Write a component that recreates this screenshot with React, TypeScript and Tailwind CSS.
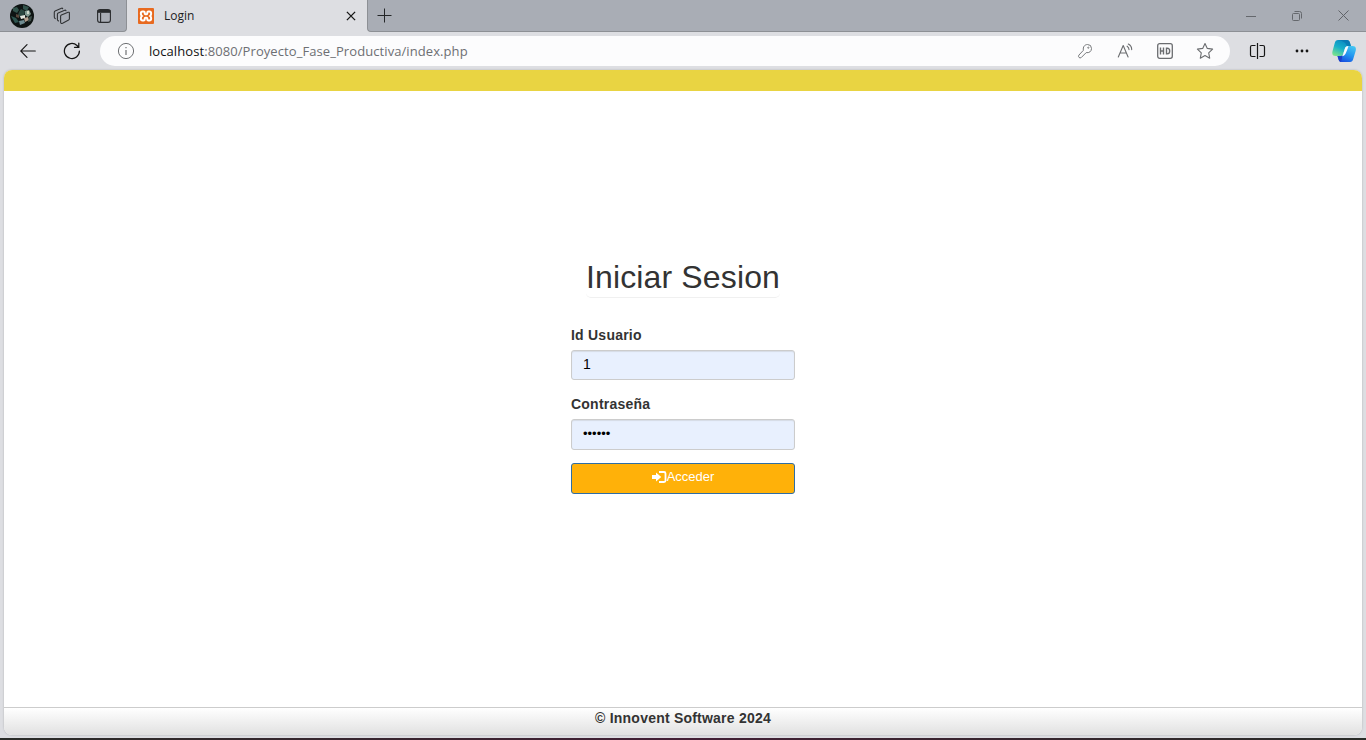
import type { ReactNode } from "react";

const ui = "font-['Open_Sans','Noto_Sans',sans-serif]";

function Cell({ className, children }: { className: string; children: ReactNode }) {
  return <div className={`flex shrink-0 items-center justify-center ${className}`}>{children}</div>;
}

function Avatar() {
  return (
    <svg width="24" height="24" viewBox="0 0 24 24">
      <defs>
        <clipPath id="avatar"><circle cx="12" cy="12" r="12" /></clipPath>
        <filter id="soft"><feGaussianBlur stdDeviation="0.5" /></filter>
      </defs>
      <g clipPath="url(#avatar)">
        <rect width="24" height="24" fill="#0e1413" />
        <g filter="url(#soft)">
          <path d="M3 4l4-1 2 3-2 3-4-2zM13 1l6 2-2 4-4-2z" fill="#31534b" />
          <path d="M9 8l2-3 4 2-1 5-4 1-2-2z" fill="#2c4740" />
          <path d="M15 7l4-1 2 4-3 3-3-2z" fill="#7e978e" />
          <path d="M17 7l2 0 0 3-2 0z" fill="#c9d3c6" />
          <path d="M10 12l5-1 0 3-4 1z" fill="#e3e6dd" />
          <path d="M14 14l4-1 1 3-4 2z" fill="#b09d8c" />
          <path d="M1 12l5 2 3 4-4 1z" fill="#2d5550" />
          <path d="M9 17l5-1 1 3-5 2z" fill="#6f8d92" />
          <path d="M6 10l3 1 0 3-3-1z" fill="#59463a" />
          <path d="M19 13l3-1-1 5-3 1z" fill="#3c4e49" />
        </g>
      </g>
    </svg>
  );
}

function WorkspacesIcon() {
  return (
    <svg width="18" height="18" viewBox="0 0 18 18" fill="none" stroke="#303234" strokeWidth="1.100" strokeLinejoin="round" strokeLinecap="round">
      <path d="M7.600 9.200q0-.9.800-1.300l6.700-2.600q1.300-.4 1.300.9v5.600q0 .9-.8 1.300l-6 3.100q-2 .8-2-1.100z" />
      <path d="M5.500 14l-.6-.5q-.5-.4-.5-1.100V7.200q0-.9.800-1.300l6.500-2.700q.9-.3 1.300.5" />
      <path d="M2.300 11.600l-.5-.4q-.5-.4-.5-1.100V5.200q0-.9.800-1.300L8.500 1.200q.9-.3 1.200.5" />
    </svg>
  );
}

function TabsIcon() {
  return (
    <svg width="14" height="14" viewBox="0 0 14 14" fill="none" stroke="#292b2d" strokeWidth="1.100">
      <rect x=".6" y=".6" width="12.800" height="12.800" rx="2.500" />
      <path d="M1 1.500h12v1.800H1z" fill="#292b2d" />
      <path d="M3.600 4v9" />
    </svg>
  );
}

function XamppIcon() {
  return (
    <svg width="16" height="16" viewBox="0 0 16 16" fill="none">
      <rect width="16" height="16" rx="1" fill="#e86a20" />
      <path d="M4.600 3.500h1Q6.700 3.500 6.700 4.600v.7q0 .9.9.9h.8q.9 0 .9-.9v-.7q0-1.100 1.100-1.100h1q1.700 0 1.700 1.700v.9q0 1.100-1 1.900 1 .8 1 1.900v.9q0 1.700-1.700 1.700h-1q-1.100 0-1.100-1.100v-.7q0-.9-.9-.9h-.8q-.9 0-.9.9v.7q0 1.100-1.100 1.100h-1q-1.700 0-1.700-1.700v-.9q0-1.100 1-1.900-1-.8-1-1.900v-.9q0-1.700 1.700-1.700z" stroke="#fff" strokeWidth="2" />
    </svg>
  );
}

function CopilotIcon() {
  return (
    <svg width="24" height="22" viewBox="0 0 24 22">
      <defs>
        <linearGradient id="left" x1="0.7" y1="0" x2="0.2" y2="1">
          <stop offset="0" stopColor="#0a86c2" /><stop offset=".5" stopColor="#17afc9" /><stop offset="1" stopColor="#7be38c" />
        </linearGradient>
        <linearGradient id="right" x1="0.8" y1="0" x2="0.3" y2="1">
          <stop offset="0" stopColor="#45c6f2" /><stop offset=".5" stopColor="#2397f0" /><stop offset="1" stopColor="#174fe0" />
        </linearGradient>
      </defs>
      <path d="M6 0h9c1.700 0 2.400.9 2.900 2.500L19 6h-2.500c-2.200 0-3 .9-3.600 2.800L11 14.500c-.5 1.300-1.300 1.500-2.800 1.500H3.500C.6 16-.2 14.200.5 11.300l2.200-8C3.300 1 4.300 0 6 0z" fill="url(#left)" />
      <path d="M18 22H9.500c-1.700 0-2.400-.9-2.900-2.500L5.500 16H8c2.200 0 3-.9 3.600-2.800l1.700-5.200C13.800 6.500 15 6 16.300 6h4.200c2.900 0 3.900 1.800 3.200 4.700l-2.400 8c-.6 2.300-1.600 3.300-3.300 3.300z" fill="url(#right)" />
      <path d="M6 0h9c1.700 0 2.400.9 2.900 2.500L19 6h-2.500c-1.200 0-2-.4-2.500-1.600C13.500 3 12.500 1.500 6 0z" fill="#0871ad" opacity=".65" />
      <path d="M5.500 16H8c1.600 0 2.300-.6 2.900-1.600L9 22c-1.400-.2-2-1-2.400-2.500z" fill="#1a3fc8" />
      <path d="M12.800 8.800C13.400 7 14.200 6 16.500 6l-.9 2.700-1.700 4.300c-.8 2-2 3-4.200 3.200.7-.4 1-.8 1.300-1.700z" fill="#fafcfd" />
    </svg>
  );
}

function TabStrip() {
  return (
    <div className="flex h-8 shrink-0 bg-[#dddee2]">
      <div className="flex w-[127px] shrink-0 rounded-br-[4px] border-r border-b border-[#8d9095] bg-[#a9adb5]">
        <Cell className="w-11"><Avatar /></Cell>
        <Cell className="w-9"><WorkspacesIcon /></Cell>
        <Cell className="w-12"><TabsIcon /></Cell>
      </div>
      <div className={`flex w-[240px] shrink-0 items-center rounded-t-[4px] bg-[#dddee2] pl-[11px] ${ui}`}>
        <XamppIcon />
        <span className="ml-[10px] w-[182px] text-[12px] leading-4 text-[#1d1d1f]">Login</span>
        <svg width="10" height="10" viewBox="0 0 10 10" stroke="#151515" strokeWidth="1.300"><path d="M.9.900l8.200 8.200M9.100.900L.9 9.100" /></svg>
      </div>
      <div className="flex flex-1 rounded-bl-[4px] border-b border-l border-[#8d9095] bg-[#a9adb5]">
        <Cell className="w-[33px]">
          <svg width="15" height="15" viewBox="0 0 15 15" stroke="#242628"><path d="M7.500.500v14M.5 7.500h14" /></svg>
        </Cell>
        <div className="flex-1" />
        <Cell className="w-[46px]"><svg width="10" height="10" stroke="#65686d"><path d="M0 5.500h10" /></svg></Cell>
        <Cell className="w-[46px]">
          <svg width="10" height="10" viewBox="0 0 10 10" fill="none" stroke="#65686d"><rect x=".5" y="2.500" width="7" height="7" rx="1" /><path d="M2.500.500h5q2 0 2 2v5" /></svg>
        </Cell>
        <Cell className="w-[46px]"><svg width="11" height="11" viewBox="0 0 11 11" stroke="#606368"><path d="M.5.500l10 10M10.500.500l-10 10" /></svg></Cell>
      </div>
    </div>
  );
}

function Toolbar() {
  return (
    <div className="flex h-[38px] shrink-0 items-center bg-[#dddee2]">
      <Cell className="w-[56px]">
        <svg width="16" height="14" viewBox="0 0 16 14" fill="none" stroke="#151515" strokeWidth="1.150" strokeLinecap="round"><path d="M15.300 7H.7M7 .7L.7 7 7 13.300" /></svg>
      </Cell>
      <Cell className="w-8">
        <svg width="18" height="18" viewBox="0 0 18 18" fill="none" stroke="#151515" strokeWidth="1.250" strokeLinecap="round"><path d="M16.400 9A7.500 7.500 0 1 1 14 3.500l1.700 1.800M15.800 1v4.300h-4.300" /></svg>
      </Cell>
      <div className="ml-3 flex h-[30px] w-[1130px] items-center rounded-full bg-[#fcfcfd] pl-[17px] pr-[5px]">
        <svg width="18" height="18" viewBox="0 0 18 18" fill="none" stroke="#6f7174"><circle cx="9" cy="9" r="7.600" /><path d="M9 8v5M9 5v1.300" strokeWidth="1.200" /></svg>
        <div className={`ml-[14px] flex-1 text-[13px] leading-[18px] tracking-[0.08px] text-[#6d6f73] ${ui}`}>
          <span className="text-[#111]">localhost</span>:8080/Proyecto_Fase_Productiva/index.php
        </div>
        <Cell className="w-10">
          <svg width="16" height="16" viewBox="0 0 16 16" fill="none" stroke="#77797c" strokeLinejoin="round"><path d="M6.400 7.300C5.700 4 7.700 1.500 10.500 1.500a4 4 0 0 1 4 4c0 2.900-2.400 4.700-5.300 4.100l-5 5q-1.200.8-2.200-.2t-.1-2.300z" /><circle cx="11.300" cy="4.700" r=".6" /></svg>
        </Cell>
        <Cell className="w-10">
          <svg width="16" height="16" viewBox="0 0 16 16" fill="none" stroke="#6b6d70" strokeWidth="1.100" strokeLinecap="round" strokeLinejoin="round"><path d="M1.300 14L6.200 2.500 11.100 14M3 10h6.400M10.100 3.200q1.900 1.200 1.900 3.400M11.300 1.100q3.400 1.800 3.400 5.500" /></svg>
        </Cell>
        <Cell className="w-10">
          <svg width="16" height="16" viewBox="0 0 16 16" fill="none" stroke="#6b6d70" strokeWidth="1.300"><rect x=".7" y=".7" width="14.600" height="14.600" rx="2" /><path d="M3.500 4.500v7M6.500 4.500v7M3.500 8h3M9.500 5.100v5.800h.6q2.600 0 2.600-2.900t-2.600-2.900z" strokeWidth="1.400" /></svg>
        </Cell>
        <Cell className="w-10">
          <svg width="18" height="18" viewBox="0 0 18 18" fill="none" stroke="#6b6d70" strokeWidth="1.100" strokeLinejoin="round"><path d="M9 1.500l2.300 4.900 5.300.7-3.900 3.700 1 5.400L9 13.600l-4.700 2.600 1-5.400L1.400 7.100l5.300-.7z" /></svg>
        </Cell>
      </div>
      <Cell className="w-[55px]">
        <svg width="17" height="16" viewBox="0 0 17 16" fill="none" stroke="#151515" strokeWidth="1.200"><path d="M8.500 0v16M6.500 2.500H3q-1.500 0-1.500 1.500v8q0 1.500 1.500 1.500h3.500M10.500 2.500H14q1.500 0 1.500 1.500v8q0 1.500-1.500 1.500h-3.500" /></svg>
      </Cell>
      <Cell className="w-[33px]">
        <svg width="14" height="4" fill="#151515"><circle cx="2" cy="2" r="1.400" /><circle cx="7" cy="2" r="1.400" /><circle cx="12" cy="2" r="1.400" /></svg>
      </Cell>
      <Cell className="ml-[14px] w-6"><CopilotIcon /></Cell>
    </div>
  );
}

function LoginPage() {
  return (
    <main className="mx-1 flex h-[665px] shrink-0 flex-col overflow-hidden rounded-[8px] bg-white font-['Liberation_Sans',Arial,sans-serif] text-[#333] shadow-[0_0_2px_#a8aaad]">
      <div className="h-[21px] shrink-0 bg-[#e9d442]" />
      <form className="mx-auto flex w-[224px] flex-1 flex-col pt-[167px]" onSubmit={(e) => e.preventDefault()}>
        <h1 className="mx-[15px] h-[40px] rounded-[5px] border-b border-[#f0f0f0] text-center text-[32px] leading-[38px] tracking-[0.14px] whitespace-nowrap">Iniciar Sesion</h1>
        <label htmlFor="user" className="mt-[27px] h-[20px] text-[14px] leading-5 font-bold tracking-[0.23px]">Id Usuario</label>
        <input id="user" defaultValue="1" className="mt-[5px] h-[30px] rounded-[3px] border border-[#ccc] bg-[#e8f0fe] px-[11px] pb-0.5 text-[14px] text-black shadow-[inset_0_1px_1px_#d5dbe5] outline-none" />
        <label htmlFor="password" className="mt-[14px] h-[20px] text-[14px] leading-5 font-bold tracking-[0.23px]">Contraseña</label>
        <input id="password" type="password" defaultValue="123456" className="mt-[5px] h-[31px] rounded-[3px] border border-[#ccc] bg-[#e8f0fe] px-[11px] pb-0.5 text-[13px] text-black shadow-[inset_0_1px_1px_#d5dbe5] outline-none" />
        <button className="mt-[13px] flex h-[31px] items-center justify-center rounded-[3px] border border-[#2e6da4] bg-[#ffb109] pb-[3px] text-[13px] leading-4 text-white">
          <svg width="15" height="14" viewBox="0 0 15 14" className="-mt-px"><path d="M0 5h4V2.500L9.300 7 4 11.500V9H0z" fill="#fff" /><path d="M7 2h5q1.500 0 1.500 1.500v7q0 1.500-1.500 1.500H7" fill="none" stroke="#fff" strokeWidth="1.800" /></svg>
          Acceder
        </button>
      </form>
      <footer className="h-7 shrink-0 border-t border-[#ccc] bg-linear-to-b from-white to-[#e1e1e1] text-center text-[14px] leading-5 font-bold tracking-[0.22px]">© Innovent Software 2024</footer>
    </main>
  );
}

export default function App() {
  return (
    <div className="flex h-[740px] w-[1366px] flex-col overflow-hidden bg-[#dddee2]">
      <TabStrip />
      <Toolbar />
      <LoginPage />
      <div className="mt-[3px] h-[2px] shrink-0 bg-linear-to-r from-[#292c28] via-[#431f35] to-[#292c28]" />
    </div>
  );
}
